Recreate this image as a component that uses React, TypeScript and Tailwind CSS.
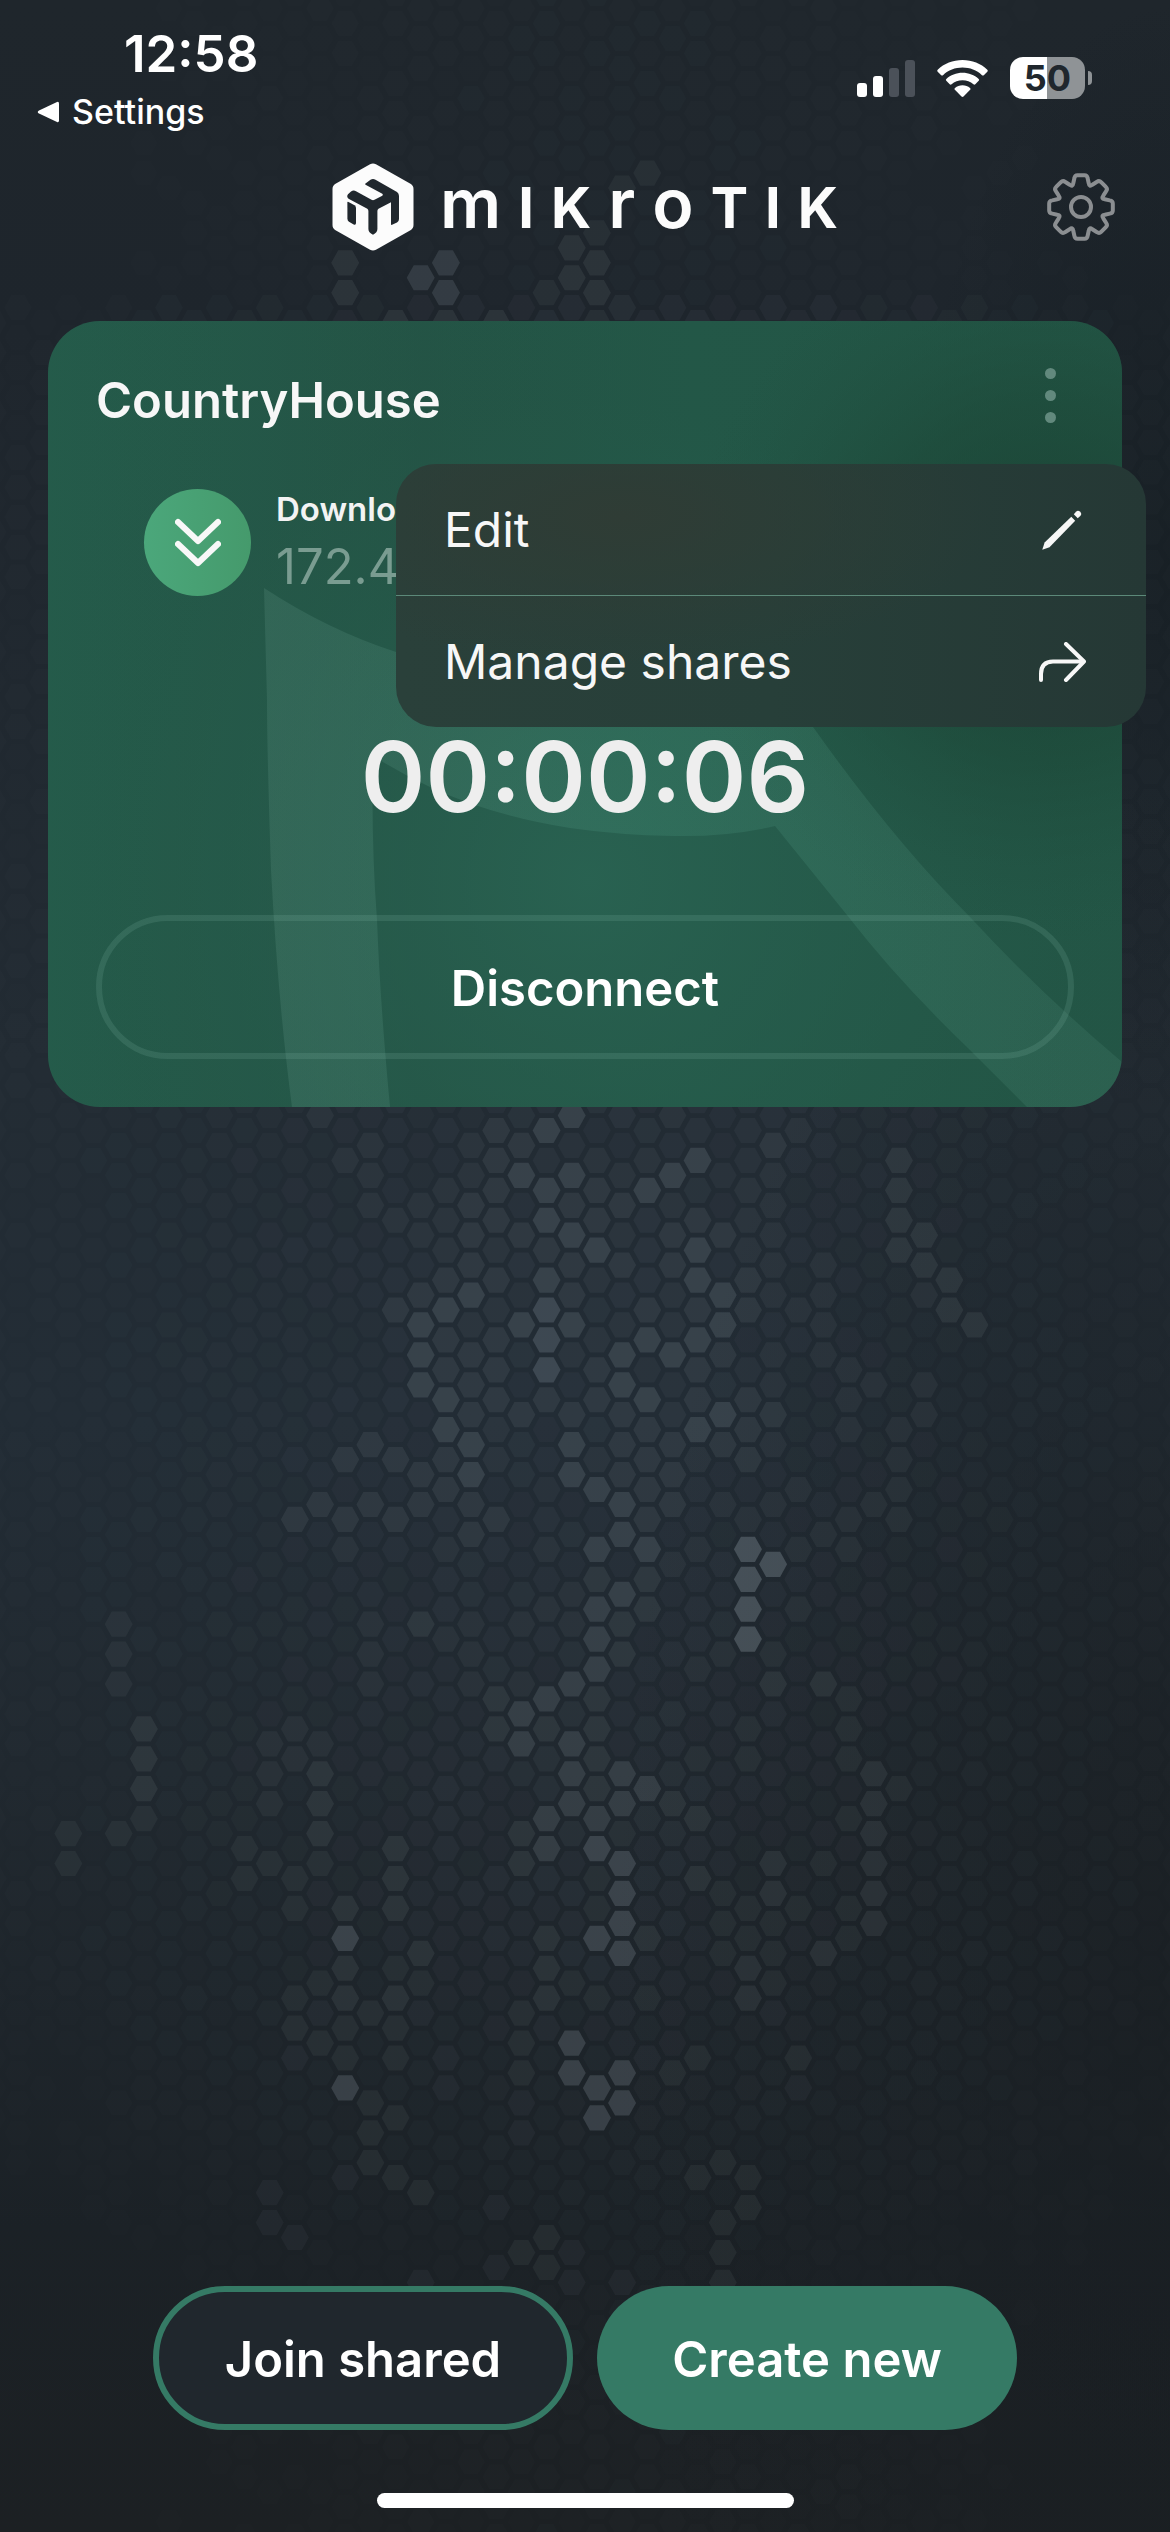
import React from "react";

/* ---------- Background: hexagon mesh ---------- */

const COL_STEP = 25.17;
const ROW_STEP = 14.96;
const ROW_ORIGIN = 88;

// Lit cells, per column: "row:level" with rows counted from the mesh's middle line.
const LIT: Record<number, string> = {
  2: "35:1 37:1",
  4: "21:1 23:1 25:1 35:1",
  5: "28:2 30:2 32:2 34:1",
  9: "36:1 38:1",
  10: "29:1 31:1 33:1 37:1 59:1 61:1",
  11: "14:2 28:1 30:1 38:1 40:1 46:1 48:2 50:1 62:1",
  12: "-13:1 13:2 29:1 31:2 33:2 35:2 37:1 45:1 47:1 49:2",
  13: "-70:2 -68:2 -10:1 10:2 14:2 16:1 40:2 42:4 44:2 46:2 48:2 50:2 52:4 58:1",
  14: "-11:1 -9:1 -7:1 9:2 13:2 21:1 23:1 25:1 47:2 53:2 55:2 57:2",
  15: "-66:2 -6:1 0:2 10:2 14:2 36:2 38:2 40:2 44:1 46:2 48:2 50:2 54:2 58:2",
  16: "-69:3 -7:1 -5:1 -1:2 1:3 3:3 5:3 11:2 13:2 21:2 43:2 45:1 47:1 59:2 65:1",
  17: "-70:3 -68:3 -66:2 -8:1 -6:1 -4:1 -2:2 0:3 2:2 4:2 6:3 8:3 10:2 12:2 16:1 22:1 50:1 52:1",
  18: "-11:1 -9:1 -7:2 -5:2 -3:2 -1:3 1:1 3:2 5:2 7:2 9:3 11:3 13:2 15:2 21:1 23:1 25:1",
  19: "-66:2 -12:2 -10:2 -8:2 -6:2 -4:1 -2:2 0:1 2:2 4:2 6:2 8:1 10:1 14:2 26:2 28:2 60:1 64:1",
  20: "-11:2 -9:3 -5:2 1:3 7:2 21:1 25:1 27:3 29:3 35:2 37:2 47:2 49:2 51:2 53:1 55:1 63:2",
  21: "-68:1 -12:3 -8:3 -6:3 -4:2 -2:3 0:4 2:4 4:4 6:2 16:1 20:1 26:3 28:2 34:3 36:3 42:2 44:2 46:2 48:1 62:2 64:2",
  22: "-71:2 -69:2 -13:3 -9:3 -7:2 -5:3 -3:2 -1:2 1:3 7:2 9:3 11:3 19:1 21:1 25:3 29:3 31:3 33:3 45:1 49:4 51:4 63:1 65:1",
  23: "-72:1 -70:2 -68:2 -8:2 -6:2 -4:3 2:1 4:2 6:2 10:1 12:3 16:3 18:2 20:3 22:3 24:3 26:2 28:2 30:2 32:2 34:3 36:4 42:4 46:1 52:4 54:4",
  24: "-75:1 -9:1 -7:2 -5:1 -3:2 1:1 3:3 5:3 7:2 9:2 11:2 13:3 15:3 19:3 21:2 23:2 31:3 33:3 37:4 39:4 41:4 43:4 47:1 51:4 53:4 65:1",
  25: "-76:1 -10:1 -8:3 0:2 2:3 6:3 8:2 10:2 12:2 14:2 16:3 18:2 20:2 32:3 42:2 46:1 50:1",
  26: "-13:1 -9:3 -7:1 -5:2 -3:2 -1:1 1:1 3:3 7:1 9:2 11:2 13:2 17:1 33:2 51:2",
  27: "-10:3 -6:2 -4:3 -2:3 0:2 2:3 4:2 6:2 8:3 10:1 16:1 24:1 30:1 34:2 38:2 50:2 58:2",
  28: "-5:2 -1:3 1:3 3:2 7:3 9:2 13:1 23:1 39:1 41:1 43:1 57:2 61:2 63:2 65:2",
  29: "-8:1 -6:1 -4:1 -2:2 0:2 6:2 8:2 10:2 14:1 16:5 18:5 20:5 22:5 28:1 30:1 40:1 42:1 44:2 46:2 58:2 60:2",
  30: "-11:2 -9:1 -7:1 -5:1 -3:1 -1:1 3:1 5:1 7:2 9:1 13:1 17:5 23:1 25:2 37:2 39:2 41:1 43:1 45:1 47:1",
  31: "-12:1 0:1 12:1 16:1 20:1 40:1 50:2 52:1",
  32: "-3:1 -1:1 1:1 3:1 15:1 25:2 37:1 43:2",
  33: "4:1 6:1 8:1 14:1 16:1 26:1 28:1 30:1 34:1 40:1 42:1",
  34: "5:1 13:1 31:2 33:2 35:2 37:2 39:2 41:2",
  35: "-10:2 -8:2 -6:2 -4:2 8:1 10:1 12:1 14:1 32:1",
  36: "-5:2 -3:2 -1:1 5:1 7:1",
  37: "-2:2 0:2",
  38: "1:2",
};

const LEVEL_ALPHA = [0, 0.05, 0.07, 0.115, 0.15, 0.2];

function buildCells() {
  const cells: { x: number; y: number; a: number }[] = [];
  for (let c = -1; c < 47; c++) {
    const lit: Record<number, number> = {};
    (LIT[c] ?? "").split(" ").forEach((pair) => {
      const [row, level] = pair.split(":");
      if (level) lit[Number(row)] = Number(level);
    });
    for (let r = -ROW_ORIGIN; r < 84; r++) {
      // Alternate columns are shifted by half a cell.
      if ((c + r) % 2 === 0) continue;
      const x = 18 + COL_STEP * c;
      const y = 1310 + ROW_STEP * r;
      const across = Math.max(0.25, 1 - Math.abs(x - 600) / 720);
      const down =
        y < 300 ? 0.35 : y > 2280 ? 0.3 : y > 1900 ? 0.3 + (0.7 * (2280 - y)) / 380 : 1;
      const noise = Math.abs((Math.sin(c * 12.9 + r * 78.2) * 43758.5) % 1);
      const base = across * down * (0.03 + 0.022 * noise);
      const level = lit[r];
      const fade = y > 2000 && level < 3 ? 0.8 : 1;
      cells.push({ x, y, a: level ? LEVEL_ALPHA[level] * fade : base });
    }
  }
  return cells;
}

const CELLS = buildCells();

function HexBackdrop() {
  return (
    <svg
      aria-hidden="true"
      className="absolute inset-0 -z-10 h-full w-full"
      viewBox="0 0 1170 2532"
      preserveAspectRatio="xMidYMid slice"
    >
      <defs>
        <linearGradient id="bg" x1="0" y1="0" x2="0" y2="1">
          <stop offset="0" stopColor="#1f262c" />
          <stop offset="0.13" stopColor="#1e252c" />
          <stop offset="0.42" stopColor="#222b33" />
          <stop offset="0.56" stopColor="#222c35" />
          <stop offset="0.7" stopColor="#20282f" />
          <stop offset="0.88" stopColor="#1b2126" />
          <stop offset="1" stopColor="#1c2023" />
        </linearGradient>
        <radialGradient id="shadeR" cx="1.02" cy="0.8" r="0.5">
          <stop offset="0" stopColor="#191e22" stopOpacity="0.85" />
          <stop offset="1" stopColor="#191e22" stopOpacity="0" />
        </radialGradient>
        <radialGradient id="shadeT" cx="1" cy="0.22" r="0.22">
          <stop offset="0" stopColor="#161e23" stopOpacity="0.8" />
          <stop offset="1" stopColor="#161e23" stopOpacity="0" />
        </radialGradient>
        <polygon id="hex" points="-14,0 -7,-12.6 7,-12.6 14,0 7,12.6 -7,12.6" />
      </defs>
      <rect width="1170" height="2532" fill="url(#bg)" />
      <rect width="1170" height="2532" fill="url(#shadeT)" />
      <rect width="1170" height="2532" fill="url(#shadeR)" />
      <g fill="#dceaf5">
        {CELLS.map((cell, i) => (
          <use key={i} href="#hex" x={cell.x} y={cell.y} fillOpacity={cell.a} />
        ))}
      </g>
    </svg>
  );
}

/* ---------- Status bar ---------- */

function StatusBar() {
  return (
    <div className="flex h-[142px] justify-between pr-[78px] pl-9">
      <div className="flex flex-col pt-7">
        <span className="ml-[88px] text-[51px] leading-[52px] font-semibold">12:58</span>
        <a href="#settings" className="mt-3 flex items-center gap-3 text-[34px] leading-10 font-medium">
          <svg width="24" height="24" viewBox="0 0 24 24" fill="currentColor" aria-hidden="true">
            <path d="M3 10.4 L21 2 Q23 1.300 23 3.500 V20.500 Q23 22.700 21 22 L3 13.600 Q0.500 12 3 10.400Z" />
          </svg>
          Settings
        </a>
      </div>
      <div className="box-content flex h-[42px] items-center pt-[57px]">
        <svg width="58" height="38" viewBox="0 0 58 38" aria-label="Cellular signal" role="img">
          <rect x="0" y="24" width="10" height="14" rx="3" fill="#fff" />
          <rect x="16" y="17" width="10" height="21" rx="3" fill="#fff" />
          <rect x="32" y="9" width="10" height="29" rx="3" fill="#4b5159" />
          <rect x="48" y="1" width="10" height="37" rx="3" fill="#4b5159" />
        </svg>
        <svg className="ml-[22px]" width="51" height="38" viewBox="0 0 51 38" aria-label="Wi-Fi" role="img" fill="#fff">
          <path d="M25.500 1 C35 1 44 4.500 50.300 10.700 Q51.200 11.700 50.300 12.700 L46.800 16.200 Q45.900 17 45 16.200 C39.700 11.300 32.900 8.600 25.500 8.600 S11.300 11.300 6 16.200 Q5.100 17 4.200 16.200 L0.700 12.700 Q-0.200 11.700 0.700 10.700 C7 4.500 16 1 25.500 1Z" />
          <path d="M25.500 13.700 C31.700 13.700 37.400 16 41.700 19.900 Q42.700 20.800 41.700 21.800 L38.300 25.300 Q37.400 26.100 36.400 25.300 C33.500 22.700 29.700 21.200 25.500 21.200 S17.500 22.700 14.600 25.300 Q13.600 26.100 12.700 25.300 L9.300 21.800 Q8.300 20.800 9.300 19.900 C13.600 16 19.300 13.700 25.500 13.700Z" />
          <path d="M25.500 26.200 C28.400 26.200 31 27.200 33 28.900 Q34 29.800 33.100 30.800 L26.500 37.500 Q25.500 38.300 24.500 37.500 L17.900 30.800 Q17 29.800 18 28.900 C20 27.200 22.600 26.200 25.500 26.200Z" />
        </svg>
        <div
          role="img"
          aria-label="Battery"
          className="ml-[22px] flex h-[42px] w-[75px] items-center justify-center rounded-[13px] bg-linear-to-r from-white from-50% to-[#8f9396] to-50% text-[36px] leading-none font-bold text-[#20272d]"
        >
          50
        </div>
        <div className="ml-[3px] h-3.5 w-1 rounded-r-full bg-[#8f9396]" />
      </div>
    </div>
  );
}

/* ---------- Header ---------- */

function BrandMark() {
  return (
    <svg width="82" height="88" viewBox="0 0 82 88" aria-hidden="true">
      <polygon
        points="41,6.500 75.500,26 75.500,62 41,81.500 6.500,62 6.500,26"
        fill="#fcfcfc"
        stroke="#fcfcfc"
        strokeWidth="12"
        strokeLinejoin="round"
      />
      <g fill="#20272d">
        <path d="M33.200 20.700 L38.500 16.800 Q41 15.400 43.500 16.800 L65 29 Q67 30.300 67 33 V56 Q67 58.500 65 59.500 L59.500 62 Q59 62 59 61 V39.300 L46.500 45.800 Q45.400 46.500 45.400 48 V66 Q45.400 69.500 41 71.700 Q36.400 69.500 36.400 66 V48 Q36.400 46.500 35.300 45.800 L17 36 Q14 34 16 31.200 L19 28.500 Q21.500 26.800 24 28.200 L39.500 36.800 Q41 37.500 42.500 36.800 L50.300 32.700 Q51.500 31.700 50.300 30.700 L34 22 Q32.500 21.300 33.200 20.700Z" />
        <path d="M15.400 39.500 Q15.400 38.500 16.500 39 L22.500 42.200 Q24 43.200 24 45 V60 Q24 62.300 21.700 61.400 L17 58.700 Q15.400 57.700 15.400 55.500Z" />
      </g>
    </svg>
  );
}

function gearOutline() {
  const point = (radius: number, degrees: number) => {
    const t = ((degrees - 90) * Math.PI) / 180;
    return `${(36 + radius * Math.cos(t)).toFixed(2)} ${(36 + radius * Math.sin(t)).toFixed(2)}`;
  };
  const parts: string[] = [];
  for (let i = 0; i < 8; i++) {
    const a = i * 45;
    parts.push(`${i === 0 ? "M" : "L"}${point(25, a - 18)}`);
    parts.push(`L${point(29.5, a - 13)}`);
    parts.push(`Q${point(32.5, a - 11)} ${point(32, a - 6)}`);
    parts.push(`L${point(32, a + 6)}`);
    parts.push(`Q${point(32.5, a + 11)} ${point(29.5, a + 13)}`);
    parts.push(`L${point(25, a + 18)}`);
    parts.push(`Q${point(21.5, a + 22.5)} ${point(25, a + 27)}`);
  }
  return parts.join(" ") + "Z";
}

const WORDMARK: { ch: string; cls: string }[] = [
  { ch: "m", cls: "text-[68px] font-semibold" },
  { ch: "I", cls: "text-[56px] font-bold" },
  { ch: "K", cls: "text-[56px] font-bold" },
  { ch: "r", cls: "text-[68px] font-semibold" },
  { ch: "o", cls: "text-[68px] font-semibold" },
  { ch: "T", cls: "text-[56px] font-bold" },
  { ch: "I", cls: "text-[56px] font-bold" },
  { ch: "K", cls: "text-[56px] font-bold" },
];

function Header() {
  return (
    <header className="relative mt-5 flex h-[90px] items-center justify-center">
      <div className="flex items-center gap-[26px]">
        <BrandMark />
        <div className="flex h-[88px] items-baseline gap-[17px] pt-1.5 leading-[68px] text-[#fcfcfc]">
          {WORDMARK.map((letter, i) => (
            <span key={i} className={letter.cls}>
              {letter.ch}
            </span>
          ))}
        </div>
      </div>
      <button type="button" aria-label="Settings" className="absolute right-[53px] text-[#8b8e91]">
        <svg width="72" height="72" viewBox="0 0 72 72" fill="none" stroke="currentColor" strokeWidth="4" strokeLinejoin="round" aria-hidden="true">
          <path d={gearOutline()} />
          <circle cx="36" cy="36" r="10" />
        </svg>
      </button>
    </header>
  );
}

/* ---------- Connection card ---------- */

function CardArt() {
  return (
    <svg
      aria-hidden="true"
      className="absolute inset-0 -z-10 h-full w-full rounded-[52px]"
      viewBox="0 0 1074 786"
      preserveAspectRatio="none"
    >
      <defs>
        <linearGradient id="cardBase" x1="0" y1="0" x2="1" y2="0">
          <stop offset="0" stopColor="#245b4a" />
          <stop offset="0.35" stopColor="#235244" />
          <stop offset="0.6" stopColor="#225646" />
          <stop offset="1" stopColor="#225444" />
        </linearGradient>
        <radialGradient id="cardGlow" gradientUnits="userSpaceOnUse" cx="540" cy="560" r="480">
          <stop offset="0" stopColor="#2a6453" stopOpacity="0.85" />
          <stop offset="1" stopColor="#265b4b" stopOpacity="0.2" />
        </radialGradient>
        <radialGradient id="cardShade" gradientUnits="userSpaceOnUse" cx="1000" cy="260" r="360">
          <stop offset="0" stopColor="#183f31" stopOpacity="0.85" />
          <stop offset="0.5" stopColor="#1b4535" stopOpacity="0.5" />
          <stop offset="1" stopColor="#1f5040" stopOpacity="0" />
        </radialGradient>
        <linearGradient id="band" x1="0" y1="0" x2="1" y2="0">
          <stop offset="0" stopColor="#8fc4b4" stopOpacity="0.13" />
          <stop offset="0.45" stopColor="#5fbb9e" stopOpacity="0.15" />
          <stop offset="1" stopColor="#7cc0aa" stopOpacity="0.1" />
        </linearGradient>
      </defs>
      <rect width="1074" height="786" fill="url(#cardBase)" />
      <rect width="1074" height="786" fill="url(#cardGlow)" />
      <rect width="1074" height="786" fill="url(#cardShade)" />
      <path
        d="M216 267 Q280 309 348 331 Q540 395 700 330 L765 406 Q846 520 922 596 Q990 670 1074 741 V786 H979 L922 729 Q850 660 799 594 L727 505 Q680 516 626 515 Q570 514 522 507 Q470 499 424 483 Q375 466 325 435 Q323 520 329 599 Q332 680 342 786 H244 Q230 680 223 549 Q219 430 219 379 Z"
        fill="url(#band)"
      />
    </svg>
  );
}

function ContextMenu() {
  return (
    <div
      role="menu"
      className="absolute top-[143px] -right-6 left-[348px] overflow-hidden rounded-[40px] bg-linear-to-r from-[#2a403a] via-[#273f39] to-[#253835] text-[48px] text-[#f7f7f7]"
    >
      <div className="absolute inset-0 bg-radial-[at_30%_20%] from-[#2f3c35] to-transparent to-50%" />
      <button type="button" role="menuitem" className="relative flex h-[131px] w-full items-center justify-between pr-16 pl-12">
        Edit
        <svg width="40" height="40" viewBox="0 0 40 40" fill="currentColor" aria-hidden="true">
          <path d="M0.300 39.700 L2.600 32.500 L29.300 6.800 L33.200 10.700 L7.500 37.300 Z" />
          <path d="M31.800 4.300 L34.300 1.500 Q36 -0.200 38.200 1.800 Q40.200 4 38.500 5.700 L35.700 8.200 Z" />
        </svg>
      </button>
      <button
        type="button"
        role="menuitem"
        className="relative flex h-[132px] w-full items-center justify-between border-t border-[#5c8979] pr-[60px] pl-12"
      >
        Manage shares
        <svg width="47" height="40" viewBox="0 0 47 40" fill="none" stroke="currentColor" strokeWidth="4" strokeLinecap="round" strokeLinejoin="round" aria-hidden="true">
          <path d="M2 38 V32 Q2 19.500 14 19.500 H44" />
          <path d="M27 2 L45 19.500 L27 38" />
        </svg>
      </button>
    </div>
  );
}

function ConnectionCard() {
  return (
    <section className="relative isolate mx-12 mt-[69px] flex min-h-[786px] flex-col rounded-[52px] px-12 pb-12">
      <CardArt />
      <div className="flex h-[160px] items-center justify-between pr-[14px]">
        <h1 className="text-[49px] leading-[60px] font-semibold text-[#f7f7f7]">CountryHouse</h1>
        <button type="button" aria-label="More options" className="flex flex-col gap-[11px] px-1 pb-3">
          <span className="size-[11px] rounded-full bg-[#62897d]" />
          <span className="size-[11px] rounded-full bg-[#62897d]" />
          <span className="size-[11px] rounded-full bg-[#62897d]" />
        </button>
      </div>
      <div className="mt-2 ml-12 flex items-start gap-[25px]">
        <div className="flex size-[107px] items-center justify-center rounded-full bg-linear-to-r from-[#4ba77b] to-[#459a6c]">
          <svg width="46" height="50" viewBox="0 0 46 50" fill="none" stroke="#f8f8f8" strokeWidth="6" strokeLinecap="round" strokeLinejoin="round" aria-hidden="true">
            <path d="M3 4 L23 23 L43 4" />
            <path d="M3 26 L23 45 L43 26" />
          </svg>
        </div>
        <dl>
          <dt className="text-[33px] leading-10 font-semibold text-[#f3f3f3]">Download</dt>
          <dd className="text-[49px] leading-[76px] text-[#7a9c91]">172.4</dd>
        </dl>
      </div>
      <div className="mt-auto text-center text-[98px] leading-[120px] font-semibold text-[#eeeeee]">00:00:06</div>
      <button
        type="button"
        className="mt-[78px] h-[144px] w-full rounded-full border-6 border-[#a0dcc8]/13 pt-1 text-[49px] font-semibold"
      >
        Disconnect
      </button>
      <ContextMenu />
    </section>
  );
}

/* ---------- Page ---------- */

export default function App() {
  return (
    <div className="relative isolate flex min-h-screen flex-col overflow-hidden bg-[#1f262c] font-['Inter',sans-serif] text-white">
      <HexBackdrop />
      <StatusBar />
      <Header />
      <main>
        <ConnectionCard />
      </main>
      <footer className="mt-auto flex flex-col items-center pb-6">
        <div className="flex w-full justify-center gap-6 px-12 text-[49px] font-semibold">
          <button type="button" className="h-[144px] max-w-[420px] flex-1 rounded-full border-6 border-[#357a65] bg-[#20272d] pt-1">
            Join shared
          </button>
          <button type="button" className="h-[144px] max-w-[420px] flex-1 rounded-full bg-[#357a65] pt-1">
            Create new
          </button>
        </div>
        <div className="mt-[63px] h-[15px] w-[417px] rounded-full bg-white" />
      </footer>
    </div>
  );
}
